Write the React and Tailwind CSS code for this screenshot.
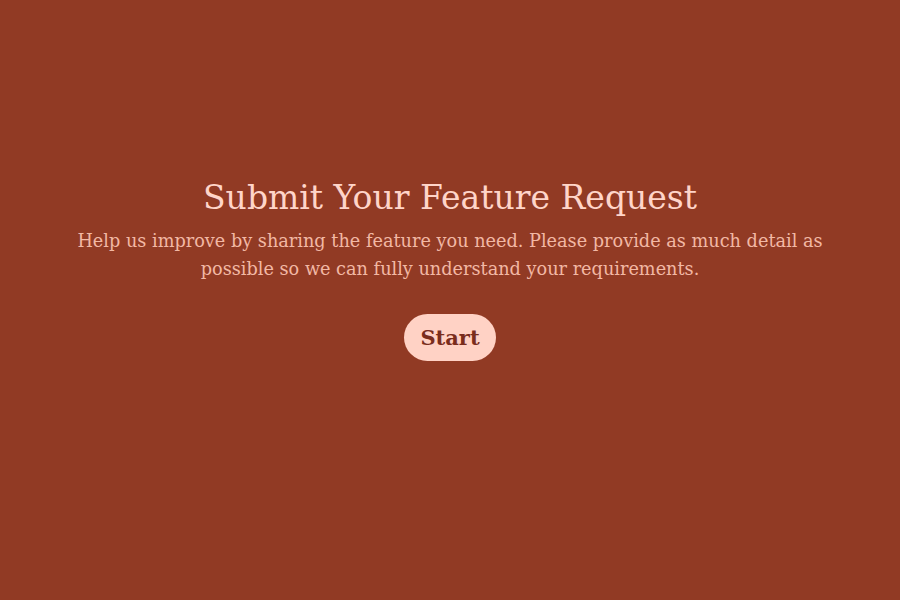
export default function App() {
  return (
    <div
      className="w-full h-[600px] bg-[#913a24] flex flex-col items-center pt-[177px]"
      style={{ fontFamily: '"DejaVu Serif", "Liberation Serif", serif' }}
    >
      <h1 className="text-[33px] leading-[42px] text-[#ffd5c9]">Submit Your Feature Request</h1>
      <p className="mt-[8px] w-[790px] text-center text-[17.7px] leading-[28px] text-[#f2b8a4]">
        Help us improve by sharing the feature you need. Please provide as much detail as possible so we can fully understand your requirements.
      </p>
      <button className="mt-[31px] h-[47px] px-[16px] rounded-full bg-[#ffd2c5] text-[#7a2d1d] text-[21px] font-bold">
        Start
      </button>
    </div>
  );
}
